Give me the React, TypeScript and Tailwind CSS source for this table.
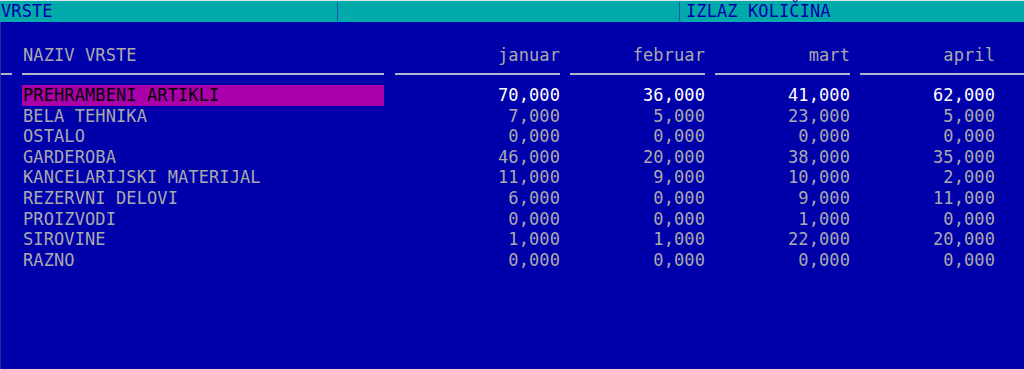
const rows: { name: string; values: string[] }[] = [
  { name: 'PREHRAMBENI ARTIKLI', values: ['70,000', '36,000', '41,000', '62,000'] },
  { name: 'BELA TEHNIKA', values: ['7,000', '5,000', '23,000', '5,000'] },
  { name: 'OSTALO', values: ['0,000', '0,000', '0,000', '0,000'] },
  { name: 'GARDEROBA', values: ['46,000', '20,000', '38,000', '35,000'] },
  { name: 'KANCELARIJSKI MATERIJAL', values: ['11,000', '9,000', '10,000', '2,000'] },
  { name: 'REZERVNI DELOVI', values: ['6,000', '0,000', '9,000', '11,000'] },
  { name: 'PROIZVODI', values: ['0,000', '0,000', '1,000', '0,000'] },
  { name: 'SIROVINE', values: ['1,000', '1,000', '22,000', '20,000'] },
  { name: 'RAZNO', values: ['0,000', '0,000', '0,000', '0,000'] },
];

const months = ['januar', 'februar', 'mart', 'april'];
const colWidths = ['w-[176px]', 'w-[145px]', 'w-[145px]', 'w-[145px]'];

export default function App() {
  return (
    <div className="w-[1024px] h-[369px] overflow-hidden bg-[#0000aa] font-['DejaVu_Sans_Mono',monospace] text-[17px] tracking-[0.1px] text-[#aaaaaa]">
      <div className="flex h-[22px] bg-[#00aaaa] border-t border-[#d8e8e8] text-[#0000aa] leading-[21px]">
        <div className="w-[337px] pl-px">VRSTE</div>
        <div className="w-px my-[1px] bg-[#2050b0]" />
        <div className="w-[341px]" />
        <div className="w-px my-[1px] bg-[#2050b0]" />
        <div className="flex-1 pl-[6px]">IZLAZ KOLIČINA</div>
      </div>

      <div className="border-l border-[#2a2aa8] h-[347px]">
        <div className="flex pt-[22px] h-[43px] leading-[22.6px]">
          <div className="w-[21px]" />
          <div className="w-[362px] pl-[1px]">NAZIV VRSTE</div>
          {months.map((m, i) => (
            <div key={m} className={`${colWidths[i]} text-right`}>
              {m}
            </div>
          ))}
        </div>

        <div className="flex mt-[8px] h-[2px]">
          <div className="w-[11px] bg-[#b4b4c8]" />
          <div className="w-[362px] ml-[10px] bg-[#b4b4c8]" />
          <div className="w-[165px] ml-[11px] bg-[#b4b4c8]" />
          <div className="w-[135px] ml-[10px] bg-[#b4b4c8]" />
          <div className="w-[135px] ml-[10px] bg-[#b4b4c8]" />
          <div className="flex-1 ml-[10px] bg-[#b4b4c8]" />
        </div>

        <div className="pt-[10px]">
          {rows.map((row, idx) => {
            const active = idx === 0;
            return (
              <div key={row.name} className="flex h-[20.6px] leading-[21.6px]">
                <div className="w-[21px]" />
                <div className={`w-[362px] pl-[1px] ${active ? 'bg-[#aa00aa] text-black' : ''}`}>
                  {row.name}
                </div>
                {row.values.map((v, i) => (
                  <div key={i} className={`${colWidths[i]} text-right ${active ? 'text-white' : ''}`}>
                    {v}
                  </div>
                ))}
              </div>
            );
          })}
        </div>
      </div>
    </div>
  );
}
